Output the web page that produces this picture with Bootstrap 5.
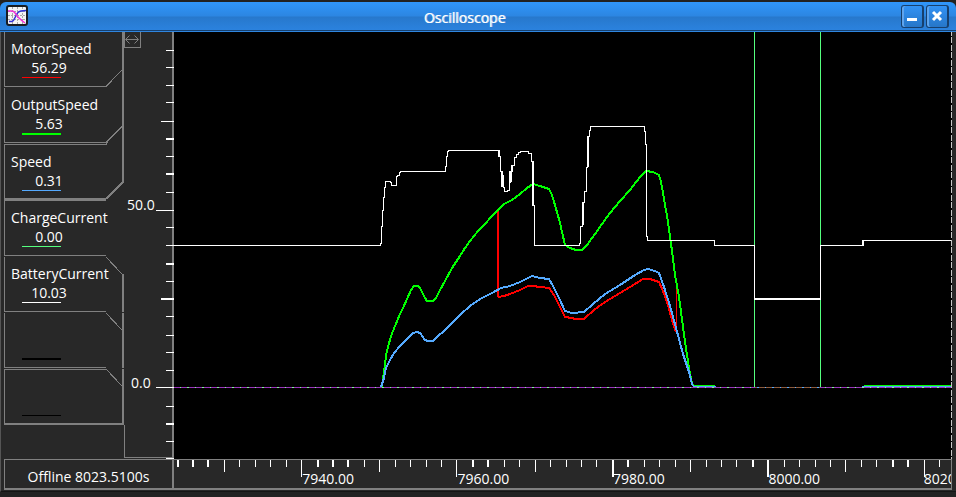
<!DOCTYPE html>
<html lang="en">
<head>
<meta charset="utf-8">
<meta name="viewport" content="width=device-width, initial-scale=1">
<title>Oscilloscope</title>
<link href="https://cdn.jsdelivr.net/npm/bootstrap@5.3.0/dist/css/bootstrap.min.css" rel="stylesheet">
<style>
  :root { --panel: #282828; --edge: #808080; }
  body { background: #202224; color: #fff; font: 14px/19px "Open Sans", "Noto Sans", sans-serif; }
  .scope-window { padding-top: 2px; padding-bottom: 5px; background: #222; }
  .title-strip {
    height: 30px; padding: 0 7px 2px 6px; border-radius: 6px 6px 0 0;
    background: linear-gradient(#3096fa 0, #2c86e2 14px, #2778cc 15px, #2b82de 28px, #17406e 28px, #17406e 29px, #2f86e0 29px);
  }
  .title-strip h1 { font-size: 14px; line-height: 19px; padding-top: 2px; text-shadow: 1px 0 0 rgba(255,255,255,.7); }
  .title-buttons { gap: 2px; }
  .win-btn {
    width: 23px; height: 23px; border: 1px solid #17406e; border-right-width: 2px; border-radius: 3px;
    background: linear-gradient(#3292f4, #2676c8); box-shadow: inset 2px 0 0 #60a4ec; color: #fff;
  }
  .scope-body { border-left: 1px solid #555; border-bottom: 1px solid #151515; background: var(--panel); padding: 0 4px 1px 3px; min-height: 0; }
  .tab-column { width: 120px; }
  .layered { display: grid; }
  .layered > * { grid-area: 1 / 1; }
  .signal-list { height: 394px; display: grid; grid-template-rows: repeat(7, 1fr); }
  .signal { padding: 7px 0 0 7px; color: #fff; text-decoration: none; }
  .signal-value { width: 76px; }
  .swatch { width: 39px; margin-left: 11px; border-top: 1px solid; }
  .swatch-thick { border-top-width: 2px; }
  .empty-tab { padding-top: 45px; }
  .c-red { color: #f00; } .c-lime { color: #0f0; } .c-blue { color: #55aaff; }
  .c-mint { color: #55ff7f; } .c-white { color: #fff; } .c-black { color: #000; }
  .value-axis { width: 50px; }
  .plot-area { background: #000; min-width: 0; }
  .time-row { height: 31px; }
  .status-cell { width: 170px; border: 1px solid var(--edge); border-width: 1px 2px 2px 1px; }
  .time-axis { min-width: 0; border: 1px solid var(--edge); border-width: 1px 1px 2px 0; }
  svg { display: block; }
  svg text { fill: #fff; }
  .crisp { shape-rendering: crispEdges; }
  .trace { fill: none; stroke-width: 1; }
  .trace-wide { stroke-width: 2; }
</style>
<script src="https://cdn.jsdelivr.net/npm/bootstrap@5.3.0/dist/js/bootstrap.bundle.min.js"></script>
</head>
<body>
<div class="scope-window d-flex flex-column vh-100 overflow-hidden">
  <header class="title-strip d-flex align-items-center justify-content-between flex-shrink-0">
    <svg width="22" height="22" viewBox="0 0 22 22" aria-hidden="true">
      <rect x="1" y="1" width="20" height="19" rx="2" fill="#f4f4f4" stroke="#181c22" stroke-width="2"/>
      <path d="M6.500 2v17M11.500 2v17M16.500 2v17M2 6.500h18M2 10.500h18M2 14.500h18" stroke="#a8a8a8" fill="none" stroke-dasharray="2 1"/>
      <path d="M3 16.500h3c3-1 3-6 6-9 2-2 5-2 8-2" fill="none" stroke="#3333d8" stroke-width="1.500"/>
      <path d="M2 6h4c3 0 4 4 6 6s4 4 7 6" fill="none" stroke="#f030d8" stroke-width="1.500"/>
    </svg>
    <h1 class="m-0 fw-normal">Oscilloscope</h1>
    <div class="title-buttons d-flex">
      <button type="button" class="win-btn p-0 flex-shrink-0" aria-label="Minimize">
        <svg class="crisp mx-auto" width="12" height="12" viewBox="0 0 12 12"><path d="M1 8h10v3H1z" fill="currentColor"/></svg>
      </button>
      <button type="button" class="win-btn p-0 flex-shrink-0" aria-label="Close">
        <svg class="mx-auto" width="12" height="12" viewBox="0 0 12 12"><path d="M2 2l8 8M10 2l-8 8" stroke="currentColor" stroke-width="3"/></svg>
      </button>
    </div>
  </header>

  <main class="scope-body d-flex flex-column flex-grow-1">
    <div class="d-flex flex-grow-1 overflow-hidden">
      <nav class="tab-column layered flex-shrink-0 align-items-start align-content-start" aria-label="Signals">
        <svg class="crisp" width="120" height="394" viewBox="4 32 120 394" aria-hidden="true">
          <g fill="none" stroke="#808080">
            <path d="M4.500 32V86.500H106L122 70M4.500 88V142.500H106M4.500 201V255.500H106M4.500 257V311.500H106M4.500 313V367.500H106M4.500 425V369.500H106M4.500 199V144.500H106L108 142"/>
            <path d="M106 257L122 274M106 313L122 330M106 369L122 386"/>
            <path d="M106 142.500L122 126.500M123 32V182L106 199M123 274V312M123 313V368M123 369V425M4 424H124" stroke-width="2"/>
            <path d="M4 199.500H106" stroke-width="3"/>
          </g>
        </svg>
        <div class="signal-list">
          <a class="signal" href="#motor">MotorSpeed<div class="signal-value text-center">56.29</div><div class="swatch c-red"></div></a>
          <a class="signal" href="#output">OutputSpeed<div class="signal-value text-center">5.63</div><div class="swatch swatch-thick c-lime"></div></a>
          <a class="signal" href="#speed">Speed<div class="signal-value text-center">0.31</div><div class="swatch c-blue"></div></a>
          <a class="signal" href="#charge">ChargeCurrent<div class="signal-value text-center">0.00</div><div class="swatch c-mint"></div></a>
          <a class="signal" href="#battery">BatteryCurrent<div class="signal-value text-center">10.03</div><div class="swatch c-white"></div></a>
          <a class="signal empty-tab" href="#six" aria-label="Empty signal 6"><div class="swatch swatch-thick c-black"></div></a>
          <a class="signal empty-tab" href="#seven" aria-label="Empty signal 7"><div class="swatch c-black"></div></a>
        </div>
      </nav>

      <svg class="value-axis flex-shrink-0 h-100" role="img" aria-label="Value axis">
        <svg class="crisp" width="100%" height="100%" viewBox="124 32 50 427" preserveAspectRatio="none">
          <path d="M124.500 425V457.500H172" fill="none" stroke="#808080"/>
          <path d="M173 32V459" stroke="#808080" stroke-width="2"/>
          <path d="M166 50.500h8M166 67.500h8M166 85.500h8M166 102.500h8M161 121.500h13M166 156.500h8M166 192.500h8M156 210.500h18M166 227.500h8M166 245.500h8M166 281.500h8M166 316.500h8M166 335.500h8M166 352.500h8M166 370.500h8M156 387.500h18M166 406.500h8M166 441.500h8M166 458.500h8" stroke="#fff"/>
          <path d="M166 139h8M166 174h8M166 264h8M161 299h13M166 424h8" stroke="#fff" stroke-width="2"/>
        </svg>
        <g fill="none" stroke="#808080">
          <path class="crisp" d="M0.500 0V15.500H16.500V0"/>
          <path d="M2 7.500H14M5.500 3.500l-4 4 4 4M10.500 3.500l4 4-4 4"/>
        </g>
        <text x="3" y="41.700%">50.0</text>
        <text x="7" y="83.400%">0.0</text>
      </svg>

      <div class="plot-area flex-grow-1">
        <svg class="crisp" width="100%" height="100%" viewBox="174 32 778 427" preserveAspectRatio="none" role="img" aria-label="Signal traces">
          <path class="trace" stroke="#9933bb" d="M174 387.500H952"/>
          <path class="trace" stroke="#7dff8c" stroke-dasharray="1 6 2 6" d="M165 387.500H952"/>
          <path class="trace" stroke="#8c5a3c" d="M755 387.500H820"/>
          <path class="trace" stroke="#55aaff" stroke-dasharray="2 6 1 6" d="M757 387.500H820"/>
          <path class="trace trace-wide" stroke="#ff0000" d="M498 210V297"/>
          <polyline class="trace trace-wide" stroke="#ff0000" points="498,297 504,296 510,294 520,290 528,286 533,286 540,287 549,288 554,295 560,307 565,317 572,318 575,319 584,319 594,310 605,302 620,293 635,284 643,279 650,279 659,282 663,291 668,305 672,320 676,332"/>
          <path class="trace" stroke="#ff0000" d="M676.500 332V287"/>
          <polyline class="trace trace-wide" stroke="#00ff00" points="382,387 383,378 385,365 386,355 388,347 391,336 395,326 400,314 403,308 407,299 411,290 414,286 418,286 420,288 422,292 425,298 427,301 433,301 436,298 440,290 445,281 452,268 460,256 465,248 470,241 478,231 485,224 492,216 498,210 504,204 512,200 520,194 527,188 533,184 540,186 549,189 552,195 555,205 560,223 565,245 570,248 576,250 582,250 587,245 595,234 602,224 610,213 620,201 630,190 640,177 646,171 653,172 659,175 661,182 663,193 668,222 672,251 675,275 679,297 683,327 687,355 689,368 692,383 693,386"/>
          <path class="trace" stroke="#00ff00" d="M693 385.500H715M864 385.500H952"/>
          <polyline class="trace trace-wide" stroke="#55aaff" points="381,387 384,378 386,368 390,360 394,353 400,346 407,339 413,333 417,332 420,333 425,340 428,341 433,341 438,336 444,331 452,323 460,315 470,306 480,299 492,293 501,288 510,286 520,282 532,276 540,278 549,279 553,286 560,300 565,311 572,313 584,312 593,304 605,294 620,285 635,275 644,270 648,269 655,271 659,273 664,287 670,306 676,328 683,354 689,372 692,384 693,386"/>
          <path class="trace" stroke="#55aaff" d="M693 386.500H716M862 386.500H952"/>
          <path class="trace" stroke="#55ff7f" d="M754.500 32V387M820.500 32V387"/>
          <path class="trace" stroke="#ffffff" d="M174 245.500H380.500V243.500H381.500V226.500H382.500V210.500H383.500V197.500H384.500V187.500H385.500V181.500H390.500V182.500H391.500V185.500H396.500V176.500H397.500V175.500H399.500V172.500H400.500V171.500H445.500V166.500H446.500V156.500H447.500V151.500H448.500V150.500H498.500V156.500H500.500V171.500H501.500V175.500H503.500V187.500H504.500V191.500H507.500V190.500H509.500V182.500H510.500V171.500H512.500V165.500H514.500V157.500H516.500V154.500H518.500V152.500H520.500V151.500H528.500V153.500H531.500V161.500H532.500V205.500H534.500V245.500H579.500V243.500H580.500V226.500H582.500V202.500H584.500V191.500H586.500V167.500H587.500V136.500H589.500V130.500H590.500V126.500H644.500V131.500H645.500V144.500H646.500V236.500H647.500V240.500H714.500V245.500H754.500V299M820.500 299V245.500H862.500V240.500H952"/>
          <path class="trace" stroke="#ffffff" d="M382.500 211V226M383.500 198V211M498.500 150V156M499.500 150V156M501.500 171V187M502.500 171V187M509.500 171V190M511.500 165V182M533.500 161V205M583.500 202V225M588.500 136V167M647.500 236V240M863.500 240V246"/>
          <path class="trace trace-wide" stroke="#ffffff" d="M754 299H821"/>
          <path class="trace" stroke="#c8c8c8" stroke-dasharray="6 1 6 2" d="M951.500 30V459"/>
        </svg>
      </div>
    </div>

    <footer class="time-row d-flex flex-shrink-0">
      <div class="status-cell d-flex align-items-center justify-content-center flex-shrink-0 text-nowrap pt-1">Offline 8023.5100s</div>
      <div class="time-axis flex-grow-1">
        <svg width="100%" height="28" role="img" aria-label="Time axis">
          <svg class="crisp" width="100%" height="28" viewBox="174 460 777 28" preserveAspectRatio="none">
            <path stroke="#fff" d="M239.500 459v8M255.500 459v8M270.500 459v8M286.500 459v8M364.500 459v8M395.500 459v8M410.500 459v8M426.500 459v8M441.500 459v8M504.500 459v8M519.500 459v8M550.500 459v8M566.500 459v8M581.500 459v8M596.500 459v8M644.500 459v8M659.500 459v8M675.500 459v8M706.500 459v8M721.500 459v8M736.500 459v8M784.500 459v8M799.500 459v8M815.500 459v8M830.500 459v8M861.500 459v8M876.500 459v8M939.500 459v8"/>
            <path stroke="#fff" stroke-width="2" d="M178 459v8M193 459v8M208 459v8M318 459v8M333 459v8M348 459v8M473 459v8M488 459v8M628 459v8M753 459v8M893 459v8M908 459v8M613 459v18M768 459v18"/>
            <path stroke="#fff" d="M224.500 459v13M379.500 459v13M535.500 459v13M690.500 459v13M845.500 459v13M301.500 459v18M456.500 459v18M924.500 459v18"/>
          </svg>
          <text x="16.500%" y="24">7940.00</text>
          <text x="36.500%" y="24">7960.00</text>
          <text x="56.500%" y="24">7980.00</text>
          <text x="76.500%" y="24">8000.00</text>
          <text x="96.500%" y="24">8020.00</text>
        </svg>
      </div>
    </footer>
  </main>
</div>
</body>
</html>
